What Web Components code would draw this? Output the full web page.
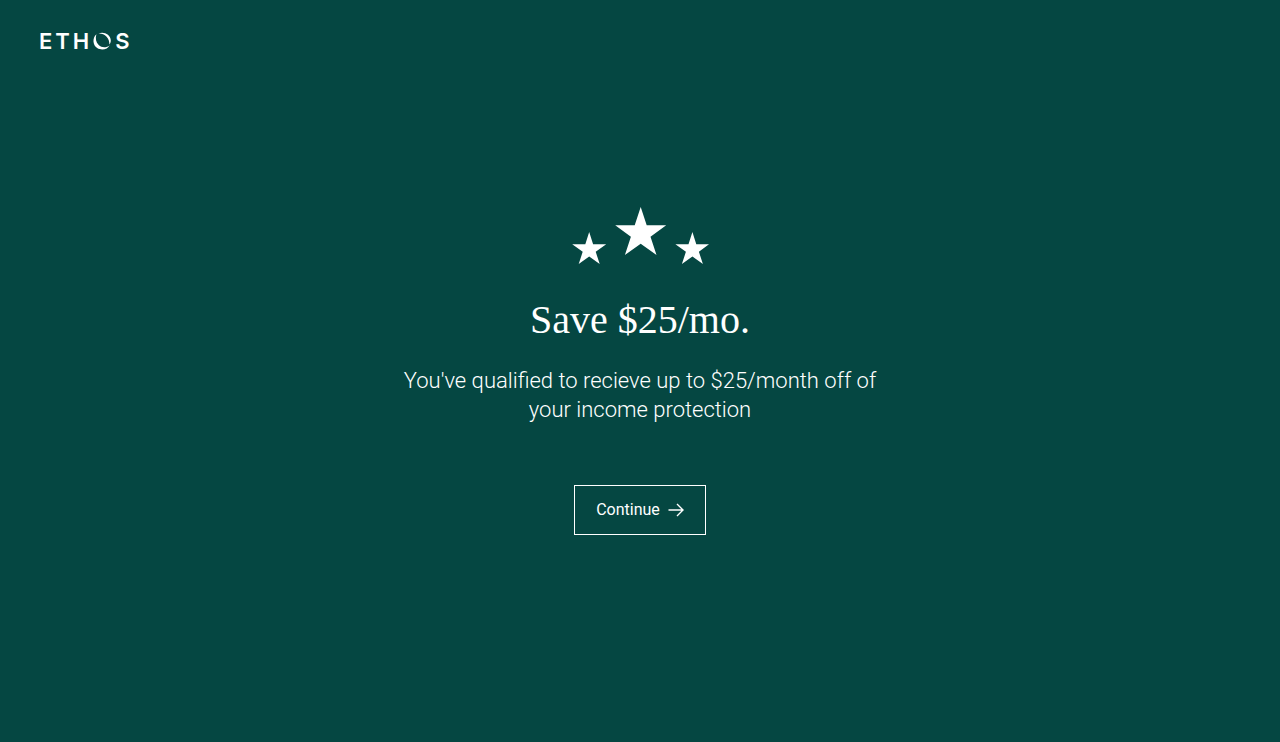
<!DOCTYPE html>
<html lang="en">
<head>
<meta charset="utf-8">
<meta name="viewport" content="width=device-width, initial-scale=1">
<title>Ethos</title>
<style>
body { margin: 0; background: #054742; color: #fff; font-family: Roboto, "Liberation Sans", sans-serif; }
</style>
</head>
<body>
<ethos-page>
  <ethos-logo slot="header"></ethos-logo>
  <ethos-offer>
    <star-trio slot="art"></star-trio>
    <span slot="title">Save $25/mo.</span>
    <span slot="text">You've qualified to recieve up to $25/month off of your income protection</span>
    <arrow-button slot="action">Continue</arrow-button>
  </ethos-offer>
</ethos-page>
<script>
const define = (name, html) => customElements.define(name, class extends HTMLElement {
  constructor() {
    super();
    this.attachShadow({ mode: 'open' }).innerHTML = html;
  }
});

define('ethos-page', `
<style>
:host { display: grid; grid-template-rows: 82px 1fr 82px; min-height: 100vh; }
header { display: flex; align-items: center; padding: 0 39px; }
main { display: grid; place-items: center; padding: 0 24px; }
</style>
<header><slot name="header"></slot></header>
<main><slot></slot></main>`);

define('ethos-logo', `
<style>
:host { display: block; }
a { display: flex; align-items: center; gap: 3px; color: inherit; text-decoration: none; font: 600 22px/24px Inter, sans-serif; }
svg { display: block; }
</style>
<a href="#" aria-label="Ethos"><span>E</span><span>T</span><span>H</span><svg width="20" height="20" viewBox="0 0 20 20" fill="#fff" aria-hidden="true"><path d="M6.4 2.6C11.2 .2 18.6 3 18.8 9.6C18.8 11.4 18.2 12.6 17.4 13.6C17.4 10.6 16.6 8 14.6 5.8C12.4 3.6 9.6 2.4 6.4 2.6Z"/><path d="M4.4 3.2C.2 6.8 .6 14 5.2 17C9.6 19.8 15.6 18.4 17.8 14.2C14.5 17 9.8 17 6.7 14.1C3.9 11.4 3.2 7.2 4.4 3.2Z"/></svg><span>S</span></a>`);

define('star-trio', `
<style>:host, svg { display: block; }</style>
<svg width="138" height="58" viewBox="0 0 138 58" fill="#fff" aria-hidden="true">
<path d="M69.7 0L75.7 18.3H95.2L79.5 29.7L85.5 48L69.7 36.7L53.9 48L59.9 29.7L44.2 18.3H63.7Z"/>
<path d="M18.2 25L22.1 37.2H35.2L24.7 44.8L28.7 57L18.2 49.5L7.7 57L11.7 44.8L1.2 37.2H14.3Z"/>
<path d="M121.4 25L125.3 37.2H138L127.9 44.8L131.9 57L121.4 49.5L110.9 57L114.9 44.8L104.4 37.2H117.5Z"/>
</svg>`);

define('ethos-offer', `
<style>
:host { display: flex; flex-direction: column; align-items: center; max-width: 500px; text-align: center; }
h1 { margin: 31px 0 0; font: 400 40px/48px "Liberation Serif", serif; }
p { margin: 22px 0 61px; font-size: 22px; line-height: 29px; font-weight: 300; }
</style>
<slot name="art"></slot>
<h1><slot name="title"></slot></h1>
<p><slot name="text"></slot></p>
<slot name="action"></slot>`);

define('arrow-button', `
<style>
:host { display: block; }
button { display: flex; align-items: center; gap: 8px; height: 50px; padding: 0 21px; border: 1px solid #fff; background: none; color: inherit; font: 400 16px/24px Roboto, sans-serif; cursor: pointer; }
svg { display: block; }
</style>
<button type="button"><slot></slot><svg width="16" height="14" viewBox="0 0 16 14" fill="none" stroke="#fff" stroke-width="1.4" aria-hidden="true"><path d="M.5 7H14.8M9 1L15 7L9 13"/></svg></button>`);
</script>
</body>
</html>
